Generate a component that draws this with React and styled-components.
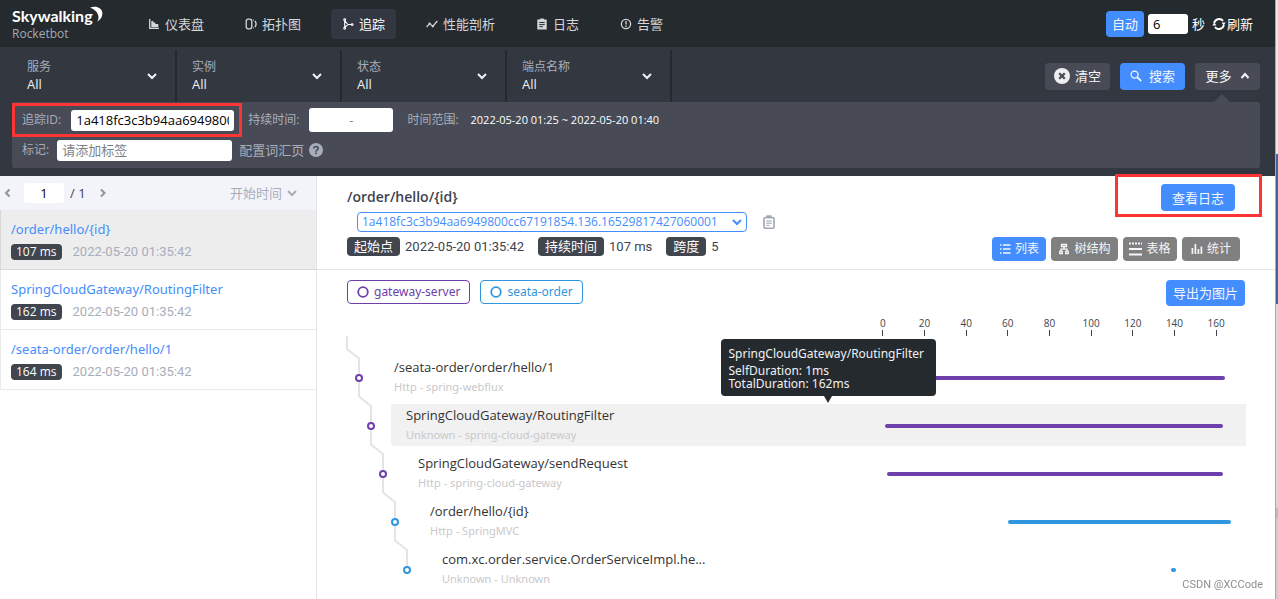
import React, { useState } from 'react';
import styled, { createGlobalStyle, css } from 'styled-components';

const GlobalStyle = createGlobalStyle`
  *, *::before, *::after { box-sizing: border-box; }
  body {
    margin: 0;
    color: #3d444f;
    background: #fff;
    font-family: 'Open Sans', 'Noto Sans CJK SC', sans-serif;
    font-size: 13px;
    line-height: 18px;
  }
  button, input, select { font: inherit; color: inherit; margin: 0; }
  button { cursor: pointer; border: 0; }
  a { text-decoration: none; color: inherit; }
  svg { display: block; flex: none; }
`;

const Shell = styled.div`
  display: flex;
  min-height: 100vh;
`;

const Page = styled.div`
  flex: 1;
  min-width: 0;
  display: flex;
  flex-direction: column;
`;

const Edge = styled.div`
  width: 3px;
  display: flex;
  flex-direction: column;
  border-left: 1px solid #a9a9ab;
  background: #d6d6d6;
`;

const EdgePart = styled.div`
  flex: ${(p) => p.$grow} 0 0;
  background: ${(p) => p.$color};
`;

/* ---------- top bar ---------- */

const TopBar = styled.header`
  height: 47px;
  flex: none;
  display: flex;
  align-items: center;
  padding: 0 22px 0 12px;
  background: #252a2f;
  color: #d4d6d9;
`;

const Brand = styled.a`
  width: 125px;
  display: flex;
  flex-direction: column;
`;

const BrandTop = styled.span`
  display: flex;
  align-items: flex-start;
  height: 20px;
  svg { margin-left: -4px; }
`;

const BrandName = styled.span`
  font: 700 16px/20px 'Lato', sans-serif;
  color: #fff;
`;

const BrandSub = styled.span`
  font-size: 12px;
  line-height: 15px;
  color: #a3a9b3;
`;

const Nav = styled.nav`
  display: flex;
  gap: 19px;
  margin-right: auto;
`;

const NavItem = styled.a`
  display: flex;
  align-items: center;
  gap: 5px;
  height: 30px;
  padding: 0 11px;
  border-radius: 4px;
  white-space: nowrap;
  ${(p) => p.$active && css`background: #333742; color: #fff;`}
`;

const Refresh = styled.div`
  display: flex;
  align-items: center;
  gap: 4px;
  color: #fff;
`;

const TextBox = styled.input`
  width: ${(p) => p.$width}px;
  height: ${(p) => p.$height || 21}px;
  padding: 0 5px;
  border: 0;
  border-radius: 3px;
  background: #fff;
  color: #000;
  text-align: ${(p) => p.$align || 'left'};
  &::placeholder { color: #7c7f86; opacity: 1; }
`;

const Button = styled.button`
  display: inline-flex;
  align-items: center;
  justify-content: center;
  gap: ${(p) => p.$gap || 5}px;
  width: ${(p) => p.$width}px;
  height: ${(p) => p.$height || 27}px;
  padding: 0;
  border-radius: 4px;
  white-space: nowrap;
  color: #f4f6fa;
  background: ${(p) => ({ primary: '#448dfe', dark: '#484b55', grey: '#808080' }[p.$tone])};
`;

const PlainButton = styled.button`
  display: flex;
  align-items: center;
  gap: 1px;
  padding: 0;
  margin-left: 3px;
  background: none;
`;

/* ---------- filters ---------- */

const Filters = styled.section`
  padding: 3px 15px 8px 12px;
  background: #333840;
`;

const FilterRow = styled.div`
  display: flex;
  height: 52px;
`;

const Selector = styled.div`
  display: flex;
  align-items: center;
  width: 165px;
  padding: 0 18px 0 15px;
  border-right: 2px solid #252a2f;
  color: #eef0f4;
`;

const SelectorBody = styled.div`
  flex: 1;
  display: flex;
  flex-direction: column;
`;

const SelectorLabel = styled.label`
  font-size: 12px;
  line-height: 16px;
  color: #a7aebb;
`;

const BareSelect = styled.select`
  appearance: none;
  border: 0;
  padding: 0;
  background: transparent;
  line-height: 18px;
`;

const Actions = styled.div`
  display: flex;
  align-items: center;
  gap: 10px;
  margin-left: auto;
`;

const Panel = styled.div`
  position: relative;
  display: flex;
  flex-direction: column;
  gap: 2px;
  padding: 4px 0 4px 10px;
  border-radius: 3px;
  background: #484b55;
  color: #a7aebb;
  font-size: 12px;
  &::before {
    content: '';
    position: absolute;
    right: 30px;
    bottom: 100%;
    border: 8px solid transparent;
    border-top-width: 0;
    border-bottom-color: #484b55;
  }
`;

const PanelRow = styled.div`
  display: flex;
  align-items: center;
  height: 28px;
`;

const Field = styled.div`
  position: relative;
  display: flex;
  align-items: center;
  gap: ${(p) => p.$gap || 10}px;
  margin-right: 14px;
  color: #a7aebb;
  input { font-size: 13px; }
`;

const Mark = styled.span`
  position: absolute;
  inset: ${(p) => p.$inset};
  border: 3px solid #fb3434;
  pointer-events: none;
`;

const Range = styled.span`
  font-size: 11px;
  color: #fff;
`;

const HintLink = styled.a`
  display: flex;
  align-items: center;
  gap: 5px;
  margin-left: -7px;
  font-size: 13px;
`;

/* ---------- trace list ---------- */

const Content = styled.div`
  flex: 1;
  display: flex;
`;

const Side = styled.aside`
  width: 317px;
  flex: none;
  border-right: 1px solid #e3e4e8;
`;

const Pager = styled.div`
  height: 34px;
  display: flex;
  align-items: center;
  padding: 0 19px 0 3px;
  background: #f3f4f9;
  color: #8d929c;
`;

const PageButton = styled.button`
  padding: 0;
  background: none;
  color: #8d929c;
`;

const PageCount = styled.div`
  display: flex;
  align-items: center;
  gap: 6px;
  margin: 0 12px 0 11px;
  color: #3d444f;
`;

const Sort = styled.div`
  display: flex;
  align-items: center;
  gap: 4px;
  margin-left: auto;
  color: #a7aebb;
`;

const TraceItem = styled.a`
  display: flex;
  flex-direction: column;
  gap: 6px;
  height: 60px;
  padding: 10px 10px 0;
  border: 1px solid ${(p) => (p.$active ? '#d8d8d8' : '#e9eaec')};
  border-width: 0 0 1px 1px;
  background: ${(p) => (p.$active ? '#ededed' : '#fff')};
`;

const TraceName = styled.span`
  font-family: 'Noto Sans', sans-serif;
  color: #448dfe;
`;

const TraceMeta = styled.span`
  display: flex;
  align-items: center;
  gap: 11px;
  color: #a7aebb;
`;

const Stamp = styled.span`
  font: 13px/16px 'Roboto', sans-serif;
`;

const Badge = styled.span`
  padding: 0 5px;
  border-radius: 4px;
  background: #40454e;
  color: #fff;
  font-size: 12px;
  line-height: 16px;
`;

/* ---------- trace detail ---------- */

const Detail = styled.main`
  flex: 1;
  min-width: 0;
`;

const DetailHead = styled.div`
  display: flex;
  justify-content: space-between;
  height: 94px;
  padding: 8px 35px 8px 30px;
  border-bottom: 1px solid #e3e4e8;
`;

const HeadInfo = styled.div`
  display: flex;
  flex-direction: column;
`;

const Title = styled.h1`
  margin: 4px 0 6px;
  font-size: 14px;
  line-height: 18px;
  font-weight: 600;
  color: #3d444f;
`;

const IdRow = styled.div`
  display: flex;
  align-items: center;
  gap: 16px;
  margin: 0 0 5px 10px;
`;

const IdSelect = styled.div`
  display: flex;
  align-items: center;
  width: 390px;
  height: 20px;
  padding: 0 4px;
  border: 1px solid #448dfe;
  border-radius: 4px;
  color: #448dfe;
  select { flex: 1; min-width: 0; font-size: 12px; }
`;

const Facts = styled.dl`
  display: flex;
  align-items: center;
  margin: 0;
`;

const FactName = styled.dt`
  margin-right: 5px;
  padding: 0 7px;
  border-radius: 4px;
  background: #40454e;
  color: #fff;
  line-height: 19px;
`;

const FactValue = styled.dd`
  margin: 0 14px 0 0;
  font: 13px/19px 'Roboto', sans-serif;
`;

const HeadSide = styled.div`
  display: flex;
  flex-direction: column;
  align-items: flex-end;
  justify-content: space-between;
`;

const LogAction = styled.div`
  position: relative;
  display: flex;
  margin-right: 5px;
`;

const Tabs = styled.div`
  display: flex;
  gap: 5px;
  font-size: 12px;
`;

const Legend = styled.div`
  display: flex;
  align-items: flex-start;
  gap: 10px;
  height: 26px;
  margin: 10px 30px 0;
`;

const Pill = styled.span`
  display: flex;
  align-items: center;
  gap: 5px;
  height: 24px;
  padding: 0 9px;
  border: 1px solid currentColor;
  border-radius: 4px;
  color: ${(p) => p.$color};
  font: 12px/18px 'Noto Sans', sans-serif;
`;

const Export = styled.div`
  margin-left: auto;
`;

const Chart = styled.div`
  position: relative;
  margin: 10px 29px 0 28px;
  padding-left: 46px;
`;

const Trunk = styled.svg`
  position: absolute;
  left: 0;
  top: 20px;
  z-index: 1;
`;

const Axis = styled.div`
  display: grid;
  grid-template-columns: repeat(9, 1fr);
  width: 375px;
  height: 40px;
  margin: 0 9px 0 auto;
`;

const Tick = styled.span`
  display: flex;
  flex-direction: column;
  align-items: center;
  font-size: 10px;
  line-height: 14px;
  &::after {
    content: '';
    width: 1px;
    height: 6px;
    background: #3d444f;
  }
`;

const SpanRow = styled.div`
  position: relative;
  display: flex;
  align-items: center;
  height: 42px;
  margin-bottom: 6px;
  border-radius: 3px 0 0 3px;
  background: ${(p) => (p.$active ? '#f1f1f1' : 'transparent')};
`;

const SpanLabel = styled.div`
  flex: 1;
  min-width: 0;
  padding-left: ${(p) => 3 + 12 * p.$depth}px;
`;

const SpanName = styled.div`
  line-height: 19px;
  color: #333;
  white-space: nowrap;
`;

const SpanKind = styled.div`
  font: 11px/19px 'Noto Sans', sans-serif;
  color: #c9c9c9;
`;

const Lane = styled.div`
  width: 348px;
  margin: 2px 15px 0 0;
`;

const Bar = styled.div`
  height: 4px;
  border-radius: 2px;
  background: ${(p) => p.$color};
`;

const Tip = styled.div`
  position: absolute;
  left: calc(50% - 98px);
  bottom: calc(100% + 8px);
  z-index: 2;
  width: 215px;
  height: 57px;
  padding: 6px 8px;
  border-radius: 4px;
  background: #252a2f;
  color: #f0f1f3;
  font: 12px/13px 'Noto Sans', sans-serif;
  white-space: nowrap;
  &::after {
    content: '';
    position: absolute;
    left: 50%;
    top: 100%;
    margin-left: -4px;
    border: 4px solid transparent;
    border-top: 7px solid #252a2f;
    border-bottom: 0;
  }
`;

const TipTitle = styled.div`
  line-height: 18px;
  margin-bottom: 1px;
`;

const Watermark = styled.div`
  position: fixed;
  right: 15px;
  bottom: 6px;
  font: 11px/16px 'Roboto', sans-serif;
  color: #8d8f93;
`;

/* ---------- icons ---------- */

const Chevron = ({ dir = 'down', size = 10, w = 2 }) => {
  const d = { down: 'M1 3l4 4 4-4', up: 'M1.500 7l3.500-4 3.500 4', left: 'M6.500 1.500L3 5l3.500 3.500', right: 'M3 1.500L6.500 5 3 8.500' }[dir];
  return (
    <svg width={size} height={size} viewBox="0 0 10 10" fill="none" stroke="currentColor" strokeWidth={w}>
      <path d={d} />
    </svg>
  );
};

const Glyph = ({ size = 12, children, ...rest }) => (
  <svg width={size} height={size} viewBox="0 0 12 12" fill="none" stroke="currentColor" strokeWidth="1.3" {...rest}>
    {children}
  </svg>
);

const DashboardIcon = () => (
  <Glyph>
    <path d="M1.700 1v9.400H11" />
    <path d="M3.300 3h2v1.500h2V6h3v3.200h-7z" fill="currentColor" stroke="none" />
  </Glyph>
);
const TopologyIcon = () => (
  <Glyph>
    <rect x="1.200" y="1.200" width="5.600" height="9.600" rx="2.200" />
    <path d="M8.200 2.200h.8M8.200 9.800h.8M10 3c1.300 1.800 1.300 4.200 0 6" />
  </Glyph>
);
const TraceIcon = () => (
  <Glyph strokeWidth="1.100">
    <circle cx="2.700" cy="1.800" r=".9" />
    <circle cx="2.700" cy="10.200" r=".9" />
    <circle cx="10.200" cy="6.600" r=".9" />
    <path d="M2.700 2.800v6.400M3 3.200l3 3.300h3.200M3 9l3-2.400" />
  </Glyph>
);
const ProfileIcon = () => (
  <Glyph>
    <path d="M.6 9l3-3.400 3.200 2.800L11.300 3" />
    <circle cx="3.600" cy="5.600" r=".5" fill="currentColor" />
    <circle cx="6.800" cy="8.300" r=".5" fill="currentColor" />
  </Glyph>
);
const LogIcon = () => (
  <Glyph>
    <path d="M1.300 1.500h2.400L4.400.4h3.200l.7 1.100h2.400v10H1.300z" fill="currentColor" stroke="none" />
    <path d="M3.300 4.500h5.400M3.300 6.600h5.400M3.300 8.700h3.600" stroke="#252a2f" strokeWidth="1" />
  </Glyph>
);
const AlarmIcon = () => (
  <Glyph>
    <circle cx="6" cy="6" r="4.600" />
    <path d="M6 3v3.600M6 7.600V9" />
  </Glyph>
);
const RefreshIcon = () => (
  <Glyph size={14} strokeWidth="1.600">
    <path d="M1.800 5.500A4.400 4.400 0 0 1 9.500 3.300M10.200 6.500A4.400 4.400 0 0 1 2.500 8.700" />
    <path d="M8.200 4.800h3.600L10 7zM.2 7.200h3.600L2 5z" fill="currentColor" stroke="none" />
  </Glyph>
);
const ClearIcon = () => (
  <Glyph size={16}>
    <circle cx="6" cy="6" r="6" fill="#eee" stroke="none" />
    <path d="M3.900 3.900l4.200 4.200M8.100 3.900L3.900 8.100" stroke="#484b55" strokeWidth="1.700" />
  </Glyph>
);
const SearchIcon = () => (
  <Glyph>
    <circle cx="4.600" cy="4.600" r="3.500" />
    <path d="M7.200 7.200l4 4" strokeWidth="1.700" />
  </Glyph>
);
const HelpIcon = () => (
  <Glyph size={14}>
    <circle cx="6" cy="6" r="6" fill="#a7aebb" stroke="none" />
    <path d="M4.200 4.700c0-2.300 3.700-2.300 3.700-.1 0 1.300-1.900 1.300-1.900 2.800M6 8.200v1.400" stroke="#484b55" strokeWidth="1.400" />
  </Glyph>
);
const ClipIcon = () => (
  <svg width="12" height="14" viewBox="0 0 12 14" fill="none" stroke="#a0a6b3">
    <rect x="1" y="2.500" width="10" height="10.700" rx="1.300" strokeWidth="1.600" />
    <path d="M3.500 1.800h5" strokeWidth="3" />
    <path d="M3.200 6h5.600M3.200 8.200h5.600M3.200 10.400h3.400" strokeWidth="1" />
  </svg>
);
const ListIcon = () => (
  <Glyph>
    <path d="M1 2h1.500M1 6h1.500M1 10h1.500M4 2h7.500M4 6h7.500M4 10h7.500" />
  </Glyph>
);
const TreeIcon = () => (
  <Glyph>
    <path d="M3.500 1.500h5v2h-5zM1.700 8.500h2.600v2.200H1.700zM7.700 8.500h2.600v2.200H7.700zM6 3.500v2.700M3 8.500V6.200h6v2.300" />
  </Glyph>
);
const TableIcon = () => (
  <svg width="13" height="14" viewBox="0 0 13 14" fill="none" stroke="currentColor">
    <path d="M0 1.500h13" strokeWidth="2" strokeDasharray="2 1" />
    <path d="M0 7h13M0 12.500h13" strokeWidth="2" />
  </svg>
);
const StatsIcon = () => (
  <Glyph strokeWidth="1.700">
    <path d="M1.400 5v6M4.400 1v10M7.400 6v5M10.400 3.500V11" />
  </Glyph>
);
const Ring = () => (
  <Glyph strokeWidth="1.800">
    <circle cx="6" cy="6" r="4.800" />
  </Glyph>
);
const Moon = () => (
  <svg width="14" height="18" viewBox="0 0 14 18">
    <path d="M1 1.800C6-.9 13.200 1.200 13.400 7.200c.1 3.800-2.200 6.600-5 8.300C9.600 13 9.900 11 9 8.800 7.800 5.300 5 3 1 1.800z" fill="#fff" />
  </svg>
);

/* ---------- data ---------- */

const PURPLE = '#6e40aa';
const BLUE = '#2f96e0';
const MAX = 167;

const navItems = [
  ['仪表盘', DashboardIcon],
  ['拓扑图', TopologyIcon],
  ['追踪', TraceIcon],
  ['性能剖析', ProfileIcon],
  ['日志', LogIcon],
  ['告警', AlarmIcon],
];
const selectors = ['服务', '实例', '状态', '端点名称'];
const traces = [
  ['/order/hello/{id}', '107 ms'],
  ['SpringCloudGateway/RoutingFilter', '162 ms'],
  ['/seata-order/order/hello/1', '164 ms'],
];
const facts = [
  ['起始点', '2022-05-20 01:35:42'],
  ['持续时间', '107 ms'],
  ['跨度', '5'],
];
const views = [
  ['列表', ListIcon, 54],
  ['树结构', TreeIcon, 67],
  ['表格', TableIcon, 54],
  ['统计', StatsIcon, 58],
];
const spans = [
  { name: '/seata-order/order/hello/1', kind: 'Http - spring-webflux', color: PURPLE, from: 0, to: 164 },
  { name: 'SpringCloudGateway/RoutingFilter', kind: 'Unknown - spring-cloud-gateway', color: PURPLE, from: 1, to: 163 },
  { name: 'SpringCloudGateway/sendRequest', kind: 'Http - spring-cloud-gateway', color: PURPLE, from: 2, to: 163 },
  { name: '/order/hello/{id}', kind: 'Http - SpringMVC', color: BLUE, from: 60, to: 167 },
  { name: 'com.xc.order.service.OrderServiceImpl.he...', kind: 'Unknown - Unknown', color: BLUE, from: 138, to: 140.5 },
];

export default function App() {
  const [view, setView] = useState('列表');
  const [trace, setTrace] = useState(0);
  return (
    <Shell>
      <GlobalStyle />
      <Page>
        <TopBar>
          <Brand href="#">
            <BrandTop>
              <BrandName>Skywalking</BrandName>
              <Moon />
            </BrandTop>
            <BrandSub>Rocketbot</BrandSub>
          </Brand>
          <Nav>
            {navItems.map(([label, Icon]) => (
              <NavItem key={label} href="#" $active={label === '追踪'}>
                <Icon />
                {label}
              </NavItem>
            ))}
          </Nav>
          <Refresh>
            <Button $tone="primary" $width={38} $height={26}>自动</Button>
            <TextBox id="seconds" $width={40} $height={20} defaultValue="6" />
            <label htmlFor="seconds">秒</label>
            <PlainButton><RefreshIcon />刷新</PlainButton>
          </Refresh>
        </TopBar>

        <Filters>
          <FilterRow>
            {selectors.map((label) => (
              <Selector key={label}>
                <SelectorBody>
                  <SelectorLabel htmlFor={label}>{label}</SelectorLabel>
                  <BareSelect id={label}><option>All</option></BareSelect>
                </SelectorBody>
                <Chevron />
              </Selector>
            ))}
            <Actions>
              <Button $tone="dark" $width={65}><ClearIcon />清空</Button>
              <Button $tone="primary" $width={65} $gap={7}><SearchIcon />搜索</Button>
              <Button $tone="dark" $width={65} $gap={8}>更多<Chevron dir="up" /></Button>
            </Actions>
          </FilterRow>
          <Panel>
            <PanelRow>
              <Field>
                <Mark $inset="-7px -8px -6px -10px" />
                <label htmlFor="traceId">追踪ID:</label>
                <TextBox id="traceId" $width={163} defaultValue="1a418fc3c3b94aa6949800cc67191854.136.16529817427060001" />
              </Field>
              <Field>
                <label htmlFor="duration">持续时间:</label>
                <TextBox id="duration" $width={84} $height={24} $align="center" placeholder="-" />
              </Field>
              <Field $gap={12}>
                <span>时间范围:</span>
                <Range>2022-05-20 01:25 ~ 2022-05-20 01:40</Range>
              </Field>
            </PanelRow>
            <PanelRow>
              <Field $gap={8}>
                <label htmlFor="tags">标记:</label>
                <TextBox id="tags" $width={175} placeholder="请添加标签" />
              </Field>
              <HintLink href="#">配置词汇页<HelpIcon /></HintLink>
            </PanelRow>
          </Panel>
        </Filters>

        <Content>
          <Side>
            <Pager>
              <PageButton aria-label="上一页"><Chevron dir="left" /></PageButton>
              <PageCount>
                <TextBox aria-label="页码" $width={40} $height={20} $align="center" defaultValue="1" />
                <span>/ 1</span>
              </PageCount>
              <PageButton aria-label="下一页"><Chevron dir="right" /></PageButton>
              <Sort>
                <BareSelect aria-label="排序"><option>开始时间</option></BareSelect>
                <Chevron />
              </Sort>
            </Pager>
            {traces.map(([name, time], i) => (
              <TraceItem key={name} href="#" $active={i === trace} onClick={() => setTrace(i)}>
                <TraceName>{name}</TraceName>
                <TraceMeta>
                  <Badge>{time}</Badge>
                  <Stamp>2022-05-20 01:35:42</Stamp>
                </TraceMeta>
              </TraceItem>
            ))}
          </Side>

          <Detail>
            <DetailHead>
              <HeadInfo>
                <Title>/order/hello/{'{id}'}</Title>
                <IdRow>
                  <IdSelect>
                    <BareSelect aria-label="Trace ID">
                      <option>1a418fc3c3b94aa6949800cc67191854.136.16529817427060001</option>
                    </BareSelect>
                    <Chevron />
                  </IdSelect>
                  <ClipIcon />
                </IdRow>
                <Facts>
                  {facts.map(([name, value]) => (
                    <React.Fragment key={name}>
                      <FactName>{name}</FactName>
                      <FactValue>{value}</FactValue>
                    </React.Fragment>
                  ))}
                </Facts>
              </HeadInfo>
              <HeadSide>
                <LogAction>
                  <Mark $inset="-10px -27px -6px -46px" />
                  <Button $tone="primary" $width={74}>查看日志</Button>
                </LogAction>
                <Tabs>
                  {views.map(([label, Icon, width]) => (
                    <Button
                      key={label}
                      $tone={label === view ? 'primary' : 'grey'}
                      $width={width}
                      $height={24}
                      $gap={4}
                      onClick={() => setView(label)}
                    >
                      <Icon />
                      {label}
                    </Button>
                  ))}
                </Tabs>
              </HeadSide>
            </DetailHead>

            <Legend>
              <Pill $color={PURPLE}><Ring />gateway-server</Pill>
              <Pill $color={BLUE}><Ring />seata-order</Pill>
              <Export><Button $tone="primary" $width={79} $height={26}>导出为图片</Button></Export>
            </Legend>

            <Chart>
              <Trunk width="70" height="244" viewBox="0 0 70 244" fill="none">
                <path
                  d="M2 0v13l12 9.500v38l12 9.500v38.500l12 9.500v38.500l12 9.500v38.500l12 9.500v20"
                  stroke="#e4e4e4"
                  strokeWidth="2"
                />
                {spans.map((s, i) => (
                  <circle key={s.name} cx={14 + 12 * i} cy={42 + 48 * i} r="3" fill="#fff" stroke={s.color} strokeWidth="2" />
                ))}
              </Trunk>
              <Axis>
                {[0, 20, 40, 60, 80, 100, 120, 140, 160].map((n) => <Tick key={n}>{n}</Tick>)}
              </Axis>
              {spans.map((s, i) => (
                <SpanRow key={s.name} $active={i === 1}>
                  <SpanLabel $depth={i}>
                    <SpanName>{s.name}</SpanName>
                    <SpanKind>{s.kind}</SpanKind>
                  </SpanLabel>
                  <Lane>
                    <Bar
                      $color={s.color}
                      style={{ marginLeft: `${(s.from / MAX) * 100}%`, width: `${((s.to - s.from) / MAX) * 100}%` }}
                    />
                  </Lane>
                  {i === 1 && (
                    <Tip role="tooltip">
                      <TipTitle>{s.name}</TipTitle>
                      <div>SelfDuration: 1ms</div>
                      <div>TotalDuration: 162ms</div>
                    </Tip>
                  )}
                </SpanRow>
              ))}
            </Chart>
          </Detail>
        </Content>
      </Page>
      <Edge aria-hidden="true">
        <EdgePart $grow={154} $color="#e8e8e8" />
        <EdgePart $grow={150} $color="#46629a" />
        <EdgePart $grow={204} $color="#d8d8d8" />
        <EdgePart $grow={10} $color="#bdbdbd" />
        <EdgePart $grow={81} $color="#cdcdcd" />
      </Edge>
      <Watermark>CSDN @XCCode</Watermark>
    </Shell>
  );
}
